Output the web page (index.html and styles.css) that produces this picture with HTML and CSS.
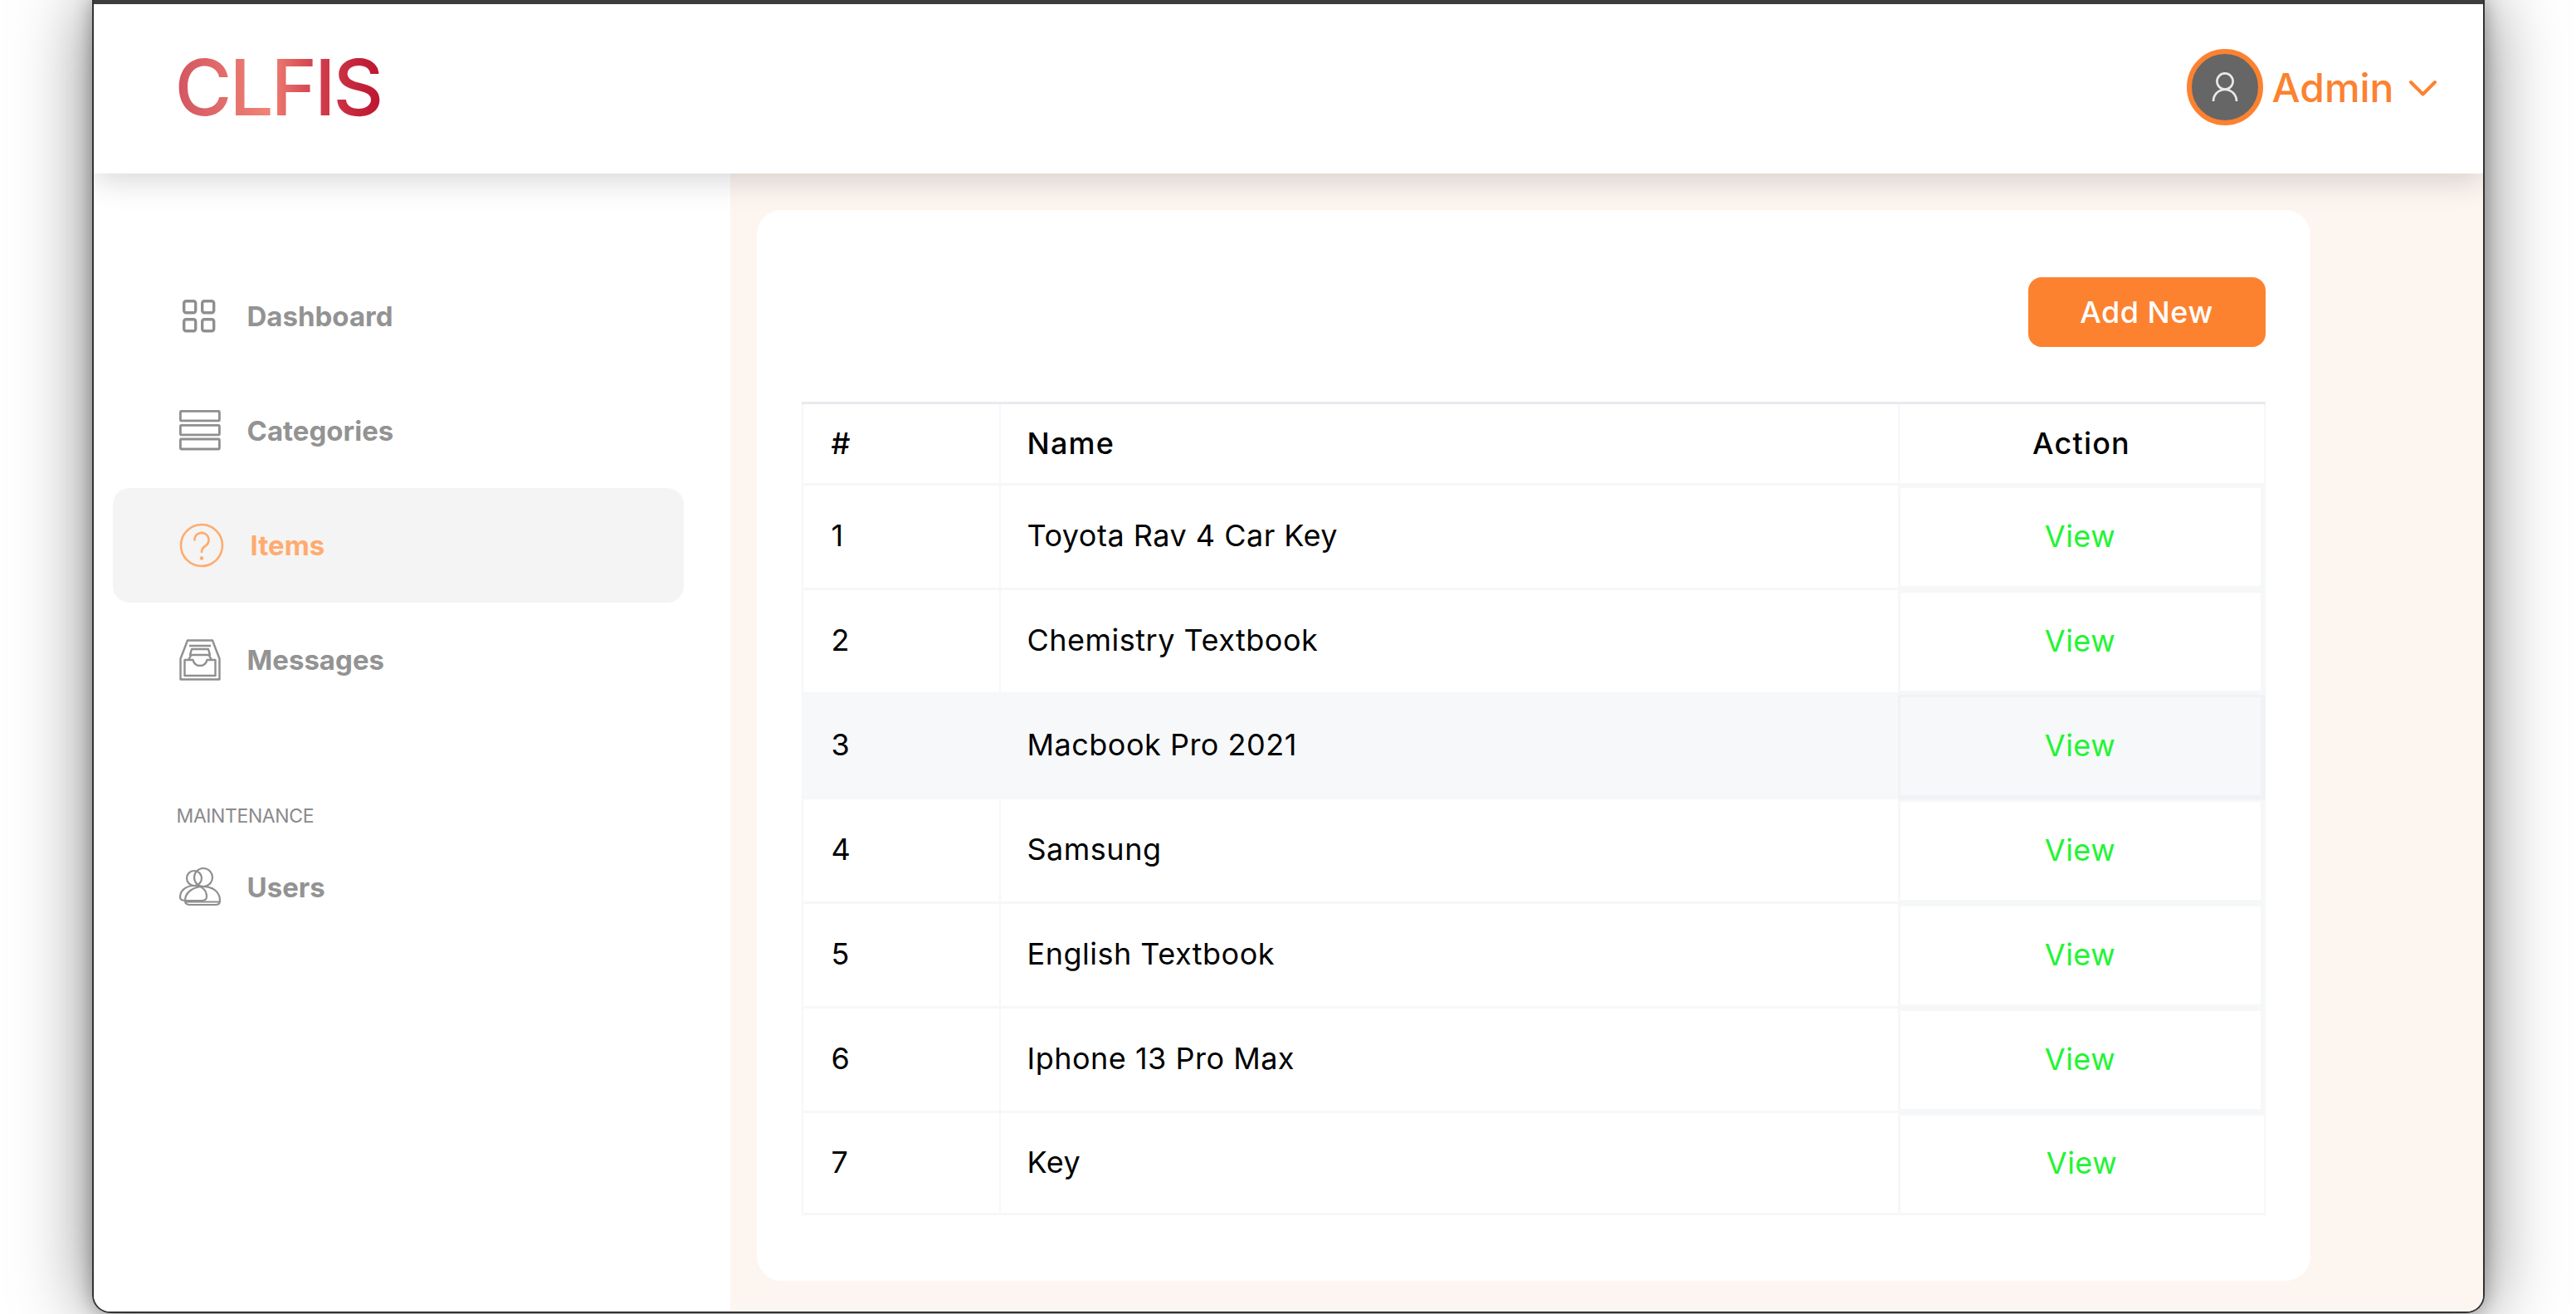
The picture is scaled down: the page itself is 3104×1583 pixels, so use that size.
FILE: index.html
```html
<!DOCTYPE html>
<html lang="en">
<head>
    <meta charset="UTF-8">
    <meta name="viewport" content="width=device-width, initial-scale=1.0">
    <title>CLFIS - Items</title>
    <link rel="stylesheet" href="styles.css">
</head>
<body>
    <div class="window">
        <div class="title-strip"></div>

        <header class="topbar">
            <div class="logo">CLFIS</div>
            <div class="account">
                <span class="avatar">
                    <svg viewBox="0 0 32 36" width="32" height="36" fill="none" stroke="#e9e9e9" stroke-width="2.6">
                        <circle cx="16" cy="11" r="9.6"/>
                        <path d="M2 35c0-8 6-14 14-14s14 6 14 14"/>
                    </svg>
                </span>
                <span class="account-name">Admin</span>
                <svg class="chevron" viewBox="0 0 33 20" width="33" height="20" fill="none" stroke="#fc8230" stroke-width="4" stroke-linecap="round" stroke-linejoin="round">
                    <path d="M2 3l14.500 14.500L31 3"/>
                </svg>
            </div>
        </header>

        <div class="layout">
            <aside class="sidebar">
                <nav class="nav">
                    <a class="nav-item" href="#">
                        <svg class="nav-icon" viewBox="0 0 50 50" fill="none" stroke="#8f8f8f" stroke-width="3.400">
                            <rect x="5.700" y="6.700" width="14" height="14" rx="2.500"/>
                            <rect x="27.700" y="6.700" width="14" height="14" rx="2.500"/>
                            <rect x="5.700" y="28.700" width="14" height="14" rx="2.500"/>
                            <rect x="27.700" y="28.700" width="14" height="14" rx="2.500"/>
                        </svg>
                        Dashboard
                    </a>
                    <a class="nav-item" href="#">
                        <svg class="nav-icon" viewBox="0 0 50 50" fill="none" stroke="#8f8f8f" stroke-width="2.800">
                            <rect x="1.400" y="1.400" width="47" height="11.500" rx="1"/>
                            <rect x="1.400" y="18.400" width="47" height="11.500" rx="1"/>
                            <rect x="1.400" y="35" width="47" height="12" rx="1"/>
                        </svg>
                        Categories
                    </a>
                    <a class="nav-item nav-item-active" href="#">
                        <svg class="nav-icon nav-icon-wide" viewBox="0 0 54 54" fill="none" stroke="#ffab6e" stroke-width="2.600" stroke-linecap="round">
                            <circle cx="27" cy="27" r="25"/>
                            <path d="M18.500 20.500a8.500 8.500 0 1 1 13.500 6.800c-2.800 2-5 3.500-5 7.700"/>
                            <circle cx="27" cy="42.500" r="1" />
                        </svg>
                        Items
                    </a>
                    <a class="nav-item" href="#">
                        <svg class="nav-icon" viewBox="0 0 50 50" fill="none" stroke="#8f8f8f" stroke-width="2.400" stroke-linejoin="round">
                            <path d="M10 1.500h30l8.500 22v25h-47v-25z"/>
                            <path d="M6.500 44V25h10c1 4 4 7 8.500 7s7.500-3 8.500-7h10v19z"/>
                            <path d="M14 20l-3 5M36 20l3 5M12 8h26"/>
                            <path d="M15 12h20l2 7H13z"/>
                        </svg>
                        Messages
                    </a>
                </nav>

                <div class="nav-label">MAINTENANCE</div>

                <nav class="nav">
                    <a class="nav-item" href="#">
                        <svg class="nav-icon" viewBox="0 0 50 50" fill="none" stroke="#8f8f8f" stroke-width="2.200">
                            <circle cx="29" cy="13" r="11"/>
                            <circle cx="18" cy="14" r="9"/>
                            <path d="M8 41h19c5 0 6-2 6-5 0-8-6-13-15-13S1 28 1 37c0 3 2 4 7 4z"/>
                            <path d="M13 46h31c4 0 5-2 5-5 0-10-8-17-20-17S7 31 7 41c0 3 2 5 6 5z"/>
                            <path d="M8 42.500h41"/>
                        </svg>
                        Users
                    </a>
                </nav>
            </aside>

            <main class="content">
                <section class="card">
                    <div class="card-actions">
                        <a class="btn-add" href="#">Add New</a>
                    </div>
                    <table class="items-table">
                        <colgroup>
                            <col class="col-num">
                            <col class="col-name">
                            <col class="col-action">
                        </colgroup>
                        <thead>
                            <tr>
                                <th>#</th>
                                <th>Name</th>
                                <th class="cell-action">Action</th>
                            </tr>
                        </thead>
                        <tbody>
                            <tr><td>1</td><td>Toyota Rav 4 Car Key</td><td class="cell-action"><a href="#">View</a></td></tr>
                            <tr><td>2</td><td>Chemistry Textbook</td><td class="cell-action"><a href="#">View</a></td></tr>
                            <tr class="row-hover"><td>3</td><td>Macbook Pro 2021</td><td class="cell-action"><a href="#">View</a></td></tr>
                            <tr><td>4</td><td>Samsung</td><td class="cell-action"><a href="#">View</a></td></tr>
                            <tr><td>5</td><td>English Textbook</td><td class="cell-action"><a href="#">View</a></td></tr>
                            <tr><td>6</td><td>Iphone 13 Pro Max</td><td class="cell-action"><a href="#">View</a></td></tr>
                            <tr class="row-last"><td>7</td><td>Key</td><td class="cell-action"><a href="#">View</a></td></tr>
                        </tbody>
                    </table>
                </section>
            </main>
        </div>
    </div>
</body>
</html>
```

FILE: styles.css
```css
* {
    box-sizing: border-box;
}

body {
    font-family: 'Inter', 'Noto Sans', sans-serif;
    margin: 0;
    height: 1583px;
    overflow: hidden;
    background: #fff;
    color: #000;
}

a {
    text-decoration: none;
    color: inherit;
}

.window {
    width: 2883px;
    height: 1582px;
    margin: 0 auto;
    display: flex;
    flex-direction: column;
    overflow: hidden;
    background: #fff;
    border: 2px solid #333;
    border-top: none;
    border-radius: 0 0 22px 22px;
    box-shadow: 0 0 90px rgba(0, 0, 0, 0.5), 0 0 22px rgba(0, 0, 0, 0.3);
}

.title-strip {
    height: 5px;
    flex: none;
    background: #404040;
}

.topbar {
    height: 204px;
    flex: none;
    display: flex;
    align-items: center;
    justify-content: space-between;
    padding: 0 56px 4px 98px;
    background: #fff;
    position: relative;
    z-index: 2;
    box-shadow: 0 8px 36px rgba(0, 0, 0, 0.16);
}

.logo {
    font-size: 94px;
    font-weight: 500;
    letter-spacing: -3px;
    line-height: 1;
    background: linear-gradient(90deg, #d35461, #f08374 45%, #d2404f 68%, #bd1530);
    -webkit-background-clip: text;
    background-clip: text;
    color: transparent;
}

.account {
    display: flex;
    align-items: center;
    color: #fc8230;
}

.avatar {
    width: 92px;
    height: 92px;
    border-radius: 50%;
    border: 6px solid #fc8230;
    background: #666;
    display: flex;
    align-items: center;
    justify-content: center;
}

.account-name {
    margin-left: 11px;
    font-size: 48px;
    font-weight: 500;
}

.chevron {
    margin-left: 18px;
    margin-top: 2px;
}

.layout {
    flex: 1;
    display: flex;
    min-height: 0;
}

.sidebar {
    width: 767px;
    flex: none;
    padding: 103px 56px 0 23px;
    background: #fff;
}

.nav {
    display: flex;
    flex-direction: column;
}

.nav-item {
    height: 138px;
    display: flex;
    align-items: center;
    gap: 32px;
    padding-left: 80px;
    border-radius: 20px;
    font-size: 33px;
    font-weight: 700;
    color: #939393;
}

.nav-item-active {
    background: #f4f4f4;
    color: #ffab6e;
}

.nav-icon {
    width: 50px;
    height: 50px;
    flex: none;
}

.nav-icon-wide {
    width: 54px;
    height: 54px;
}

.nav-label {
    margin: 105px 0 3px 77px;
    height: 28px;
    font-size: 23px;
    letter-spacing: -0.4px;
    line-height: 28px;
    color: #8a8a8a;
}

.content {
    flex: 1;
    padding: 44px 208px 37px 32px;
    background: #fdf5f0;
}

.card {
    height: 100%;
    padding: 81px 54px;
    background: #fff;
    border-radius: 30px;
}

.card-actions {
    display: flex;
    justify-content: flex-end;
    margin-bottom: 66px;
}

.btn-add {
    width: 286px;
    height: 84px;
    display: flex;
    align-items: center;
    justify-content: center;
    border-radius: 16px;
    background: #fc8230;
    color: #fff;
    font-size: 36px;
    font-weight: 500;
    letter-spacing: 0.5px;
}

.items-table {
    width: 100%;
    table-layout: fixed;
    border-collapse: separate;
    border-spacing: 0;
    border-top: 3px solid #e9e9ef;
    font-size: 36px;
    letter-spacing: 0.5px;
}

.col-num {
    width: 238px;
}

.col-name {
    width: 1083px;
}

.items-table th,
.items-table td {
    padding: 0 0 3px 32px;
    text-align: left;
    border-left: 2px solid #f6f7f9;
    border-bottom: 3px solid #f6f7f9;
}

.items-table th:first-child,
.items-table td:first-child {
    padding-left: 34px;
}

.items-table th {
    height: 98px;
    padding-bottom: 2px;
    font-weight: 500;
    letter-spacing: 1.2px;
}

.items-table td {
    height: 126px;
    font-weight: 400;
}

.items-table .cell-action {
    padding-left: 0;
    text-align: center;
    border-right: 2px solid #f6f7f9;
}

.items-table td.cell-action {
    border-left-width: 3px;
    border-right-width: 6px;
    border-top: 3px solid #f6f7f9;
    border-bottom-width: 5px;
    color: #20f530;
}

.row-hover td {
    background: #f7f8fa;
}

.items-table .row-hover td.cell-action {
    border-color: #f1f2f6;
}

.items-table .row-last td {
    height: 123px;
    border-bottom-width: 3px;
}

.items-table .row-last td.cell-action {
    border-right-width: 2px;
}
```
